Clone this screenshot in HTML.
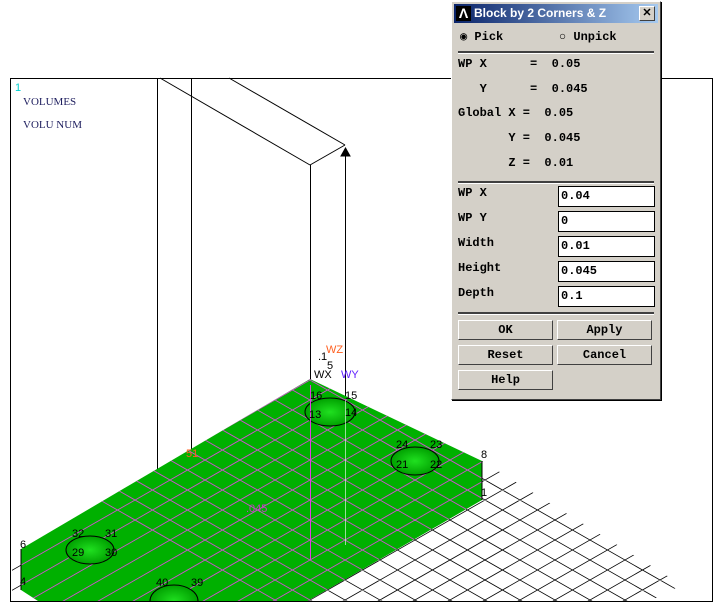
<!DOCTYPE html>
<html><head><style>
body{margin:0;width:720px;height:614px;background:#fff;position:relative;overflow:hidden;font-family:"Liberation Mono",monospace;}
.dlg{position:absolute;left:451px;top:1px;width:208px;height:397px;background:#d4d0c8;border:1px solid #fff;border-right-color:#404040;border-bottom-color:#404040;box-shadow:1px 1px 0 #000;}
.title{position:absolute;left:2px;top:2px;width:204px;height:19px;background:linear-gradient(90deg,#0a246a,#a6caf0);color:#fff;font:bold 12px "Liberation Sans",sans-serif;line-height:19px;}
.t{position:absolute;font-weight:bold;font-size:12px;color:#000;white-space:pre;line-height:14px;}
.sep{position:absolute;left:6px;width:196px;height:2px;background:#404040;border-bottom:1px solid #fff;}
.in{position:absolute;left:106px;width:93px;height:19px;background:#fff;border:1px solid #000;font-weight:bold;font-size:12px;line-height:19px;padding-left:2px;box-sizing:content-box;}
.btn{position:absolute;width:93px;height:18px;border:1px solid #fff;border-right-color:#404040;border-bottom-color:#404040;font-weight:bold;font-size:12px;text-align:center;line-height:18px;}
</style></head><body>
<svg width="720" height="614" style="position:absolute;left:0;top:0">
<defs>
<clipPath id="cw"><polygon points="482,461 682,585 650,601 300,601"/><polygon points="12,552 21,549 21,601 12,601"/></clipPath>
<clipPath id="cg"><polygon points="310,379 482,461 482,500 308,601 38,601 21,590 21,549"/></clipPath>
<clipPath id="cf"><rect x="0" y="0" width="720" height="601"/></clipPath>
<path id="grid" fill="none" d="M-510 151.4L290 608.6M-475 151.4L325 608.6M-440 151.4L360 608.6M-405 151.4L395 608.6M-370 151.4L430 608.6M-335 151.4L465 608.6M-300 151.4L500 608.6M-265 151.4L535 608.6M-230 151.4L570 608.6M-195 151.4L605 608.6M-160 151.4L640 608.6M-125 151.4L675 608.6M-90 151.4L710 608.6M-55 151.4L745 608.6M-20 151.4L780 608.6M15 151.4L815 608.6M50 151.4L850 608.6M85 151.4L885 608.6M120 151.4L920 608.6M155 151.4L955 608.6M190 151.4L990 608.6M225 151.4L1025 608.6M260 151.4L1060 608.6M295 151.4L1095 608.6M330 151.4L1130 608.6
M-510 608.6L290 151.4M-475 608.6L325 151.4M-440 608.6L360 151.4M-405 608.6L395 151.4M-370 608.6L430 151.4M-335 608.6L465 151.4M-300 608.6L500 151.4M-265 608.6L535 151.4M-230 608.6L570 151.4M-195 608.6L605 151.4M-160 608.6L640 151.4M-125 608.6L675 151.4M-90 608.6L710 151.4M-55 608.6L745 151.4M-20 608.6L780 151.4M15 608.6L815 151.4M50 608.6L850 151.4M85 608.6L885 151.4M120 608.6L920 151.4M155 608.6L955 151.4M190 608.6L990 151.4M225 608.6L1025 151.4M260 608.6L1060 151.4M295 608.6L1095 151.4M330 608.6L1130 151.4
M200 702.8L800 360M200 722.8L800 380M200 742.8L800 400M200 762.8L800 420M200 782.8L800 440M200 802.8L800 460M200 822.8L800 480M200 842.8L800 500M200 862.8L800 520M200 882.8L800 540M200 902.8L800 560M200 922.8L800 580M200 942.8L800 600M200 962.8L800 620"/>
<radialGradient id="hg"><stop offset="0" stop-color="#20e020"/><stop offset="1" stop-color="#00a000"/></radialGradient>
</defs>
<g clip-path="url(#cw)"><use href="#grid" stroke="#000" stroke-width="0.8"/></g>
<rect x="10.5" y="78.5" width="702" height="523" fill="none" stroke="#000"/>
<g stroke="#000" fill="none">
<line x1="157.5" y1="78" x2="157.5" y2="470"/>
<line x1="191.5" y1="78" x2="191.5" y2="455"/>
<line x1="160" y1="78" x2="310" y2="165"/>
<line x1="229" y1="78" x2="345" y2="145"/>
<line x1="310" y1="165" x2="345" y2="145"/>
<line x1="310.5" y1="165" x2="310.5" y2="385"/>
<line x1="345.5" y1="150" x2="345.5" y2="545"/>
<path d="M341 156 L345.5 148 L350 156Z" fill="#000"/>
</g>
<polygon points="310,379 482,461 482,500 308,601 38,601 21,590 21,549" fill="#00b000"/>
<g clip-path="url(#cg)"><use href="#grid" stroke="#d050d0" stroke-width="0.9"/></g>
<g stroke="#000" fill="url(#hg)" clip-path="url(#cf)">
<ellipse cx="330" cy="412" rx="25" ry="14"/>
<ellipse cx="415" cy="461" rx="24" ry="14"/>
<ellipse cx="90" cy="550" rx="24" ry="14"/>
<ellipse cx="174" cy="601" rx="24" ry="16"/>
</g>
<line x1="21" y1="549" x2="21" y2="590" stroke="#000"/>
<line x1="482" y1="461" x2="482" y2="500" stroke="#000"/>
<line x1="310.5" y1="385" x2="310.5" y2="560" stroke="#e040e0"/>
<line x1="345.5" y1="400" x2="345.5" y2="545" stroke="#fff" stroke-opacity=".6"/>
<g font-family="Liberation Sans,sans-serif" font-size="11">
<text x="15" y="91" fill="#00d0d0">1</text>
<text x="23" y="105" font-family="Liberation Serif,serif" fill="#202060">VOLUMES</text>
<text x="23" y="128" font-family="Liberation Serif,serif" fill="#202060">VOLU NUM</text>
<text x="326" y="353" fill="#ff6020">WZ</text>
<text x="318" y="360" fill="#000">.1</text>
<text x="327" y="369" fill="#000">5</text>
<text x="314" y="378" fill="#000">WX</text>
<text x="341" y="378" fill="#6020ff">WY</text>
<text x="310" y="399" fill="#000">16</text>
<text x="345" y="399" fill="#000">15</text>
<text x="309" y="418" fill="#000">13</text>
<text x="345" y="416" fill="#000">14</text>
<text x="396" y="448" fill="#000">24</text>
<text x="430" y="448" fill="#000">23</text>
<text x="396" y="468" fill="#000">21</text>
<text x="430" y="468" fill="#000">22</text>
<text x="481" y="458" fill="#000">8</text>
<text x="481" y="496" fill="#000">1</text>
<text x="186" y="457" fill="#ff6020">51</text>
<text x="246" y="512" fill="#c040c0">.045</text>
<text x="20" y="548" fill="#000">6</text>
<text x="20" y="585" fill="#000">4</text>
<text x="72" y="537" fill="#000">32</text>
<text x="105" y="537" fill="#000">31</text>
<text x="72" y="556" fill="#000">29</text>
<text x="105" y="556" fill="#000">30</text>
<text x="156" y="586" fill="#000">40</text>
<text x="191" y="586" fill="#000">39</text>
</g>
</svg>
<div class="dlg">
<div class="title"><span style="display:inline-block;width:15px;height:15px;background:#000;margin:2px 3px 0 2px;vertical-align:top;color:#fff;font-size:14px;line-height:15px;text-align:center">Λ</span>Block by 2 Corners &amp; Z
<span style="position:absolute;right:3px;top:2px;width:14px;height:13px;background:#d4d0c8;border:1px solid #fff;border-right-color:#404040;border-bottom-color:#404040;color:#000;font-size:11px;line-height:13px;text-align:center">✕</span></div>
<div class="t" style="left:8px;top:28px">◉ Pick</div>
<div class="t" style="left:107px;top:28px">○ Unpick</div>
<div class="sep" style="top:49px"></div>
<div class="t" style="left:6px;top:55px">WP X      =  0.05</div>
<div class="t" style="left:6px;top:80px">   Y      =  0.045</div>
<div class="t" style="left:6px;top:104px">Global X =  0.05</div>
<div class="t" style="left:6px;top:129px">       Y =  0.045</div>
<div class="t" style="left:6px;top:154px">       Z =  0.01</div>
<div class="sep" style="top:179px"></div>
<div class="t" style="left:6px;top:184px">WP X</div><div class="in" style="top:184px">0.04</div>
<div class="t" style="left:6px;top:209px">WP Y</div><div class="in" style="top:209px">0</div>
<div class="t" style="left:6px;top:234px">Width</div><div class="in" style="top:234px">0.01</div>
<div class="t" style="left:6px;top:259px">Height</div><div class="in" style="top:259px">0.045</div>
<div class="t" style="left:6px;top:284px">Depth</div><div class="in" style="top:284px">0.1</div>
<div class="sep" style="top:310px"></div>
<div class="btn" style="left:6px;top:318px">OK</div>
<div class="btn" style="left:105px;top:318px">Apply</div>
<div class="btn" style="left:6px;top:343px">Reset</div>
<div class="btn" style="left:105px;top:343px">Cancel</div>
<div class="btn" style="left:6px;top:368px">Help</div>
</div>
</body></html>
